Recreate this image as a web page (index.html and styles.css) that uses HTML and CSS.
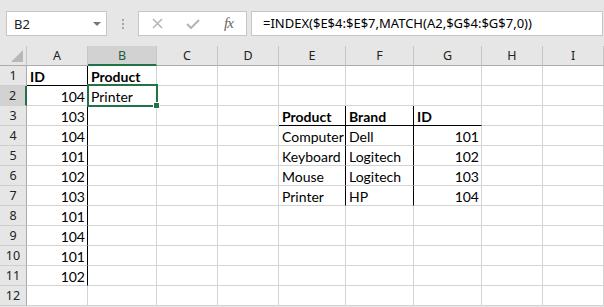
FILE: index.html
```html
<!DOCTYPE html>
<html lang="en">
<head>
    <meta charset="UTF-8">
    <title>INDEX MATCH</title>
    <link rel="stylesheet" href="styles.css">
</head>
<body>
    <div class="toolbar">
        <div class="namebox">
            <span>B2</span>
            <span class="drop"></span>
        </div>
        <div class="grip"><i></i><i></i><i></i></div>
        <div class="fxbox">
            <svg class="btn-x" width="11" height="11" viewBox="0 0 11 11"><path d="M1 1L10 10M10 1L1 10" stroke="#b4b4b4" stroke-width="1.5" fill="none"/></svg>
            <svg class="btn-ok" width="14" height="10" viewBox="0 0 14 10"><path d="M1 5L5 9L13 1" stroke="#b4b4b4" stroke-width="2" fill="none"/></svg>
            <span class="fx">fx</span>
        </div>
        <div class="formula">=INDEX($E$4:$E$7,MATCH(A2,$G$4:$G$7,0))</div>
    </div>

    <div class="grid">
        <div class="row head">
            <div class="corner"><span class="tri"></span></div>
            <div class="ch">A</div><div class="ch sel">B</div><div class="ch">C</div><div class="ch">D</div>
            <div class="ch">E</div><div class="ch">F</div><div class="ch">G</div><div class="ch">H</div><div class="ch">I</div>
        </div>
        <div class="row">
            <div class="rh">1</div>
            <div class="c b bb vr">ID</div><div class="c b">Product</div><div class="c"></div><div class="c"></div>
            <div class="c"></div><div class="c"></div><div class="c"></div><div class="c"></div><div class="c"></div>
        </div>
        <div class="row">
            <div class="rh sel">2</div>
            <div class="c n vr">104</div><div class="c active">Printer</div><div class="c"></div><div class="c"></div>
            <div class="c"></div><div class="c"></div><div class="c"></div><div class="c"></div><div class="c"></div>
        </div>
        <div class="row">
            <div class="rh">3</div>
            <div class="c n vr">103</div><div class="c"></div><div class="c"></div><div class="c"></div>
            <div class="c b bb vr">Product</div><div class="c b bb vr">Brand</div><div class="c b bb">ID</div><div class="c"></div><div class="c"></div>
        </div>
        <div class="row">
            <div class="rh">4</div>
            <div class="c n vr">104</div><div class="c"></div><div class="c"></div><div class="c"></div>
            <div class="c vr">Computer</div><div class="c vr">Dell</div><div class="c n">101</div><div class="c"></div><div class="c"></div>
        </div>
        <div class="row">
            <div class="rh">5</div>
            <div class="c n vr">101</div><div class="c"></div><div class="c"></div><div class="c"></div>
            <div class="c vr">Keyboard</div><div class="c vr">Logitech</div><div class="c n">102</div><div class="c"></div><div class="c"></div>
        </div>
        <div class="row">
            <div class="rh">6</div>
            <div class="c n vr">102</div><div class="c"></div><div class="c"></div><div class="c"></div>
            <div class="c vr">Mouse</div><div class="c vr">Logitech</div><div class="c n">103</div><div class="c"></div><div class="c"></div>
        </div>
        <div class="row">
            <div class="rh">7</div>
            <div class="c n vr">103</div><div class="c"></div><div class="c"></div><div class="c"></div>
            <div class="c vr">Printer</div><div class="c vr">HP</div><div class="c n">104</div><div class="c"></div><div class="c"></div>
        </div>
        <div class="row">
            <div class="rh">8</div>
            <div class="c n vr">101</div><div class="c"></div><div class="c"></div><div class="c"></div>
            <div class="c"></div><div class="c"></div><div class="c"></div><div class="c"></div><div class="c"></div>
        </div>
        <div class="row">
            <div class="rh">9</div>
            <div class="c n vr">104</div><div class="c"></div><div class="c"></div><div class="c"></div>
            <div class="c"></div><div class="c"></div><div class="c"></div><div class="c"></div><div class="c"></div>
        </div>
        <div class="row">
            <div class="rh">10</div>
            <div class="c n vr">101</div><div class="c"></div><div class="c"></div><div class="c"></div>
            <div class="c"></div><div class="c"></div><div class="c"></div><div class="c"></div><div class="c"></div>
        </div>
        <div class="row">
            <div class="rh">11</div>
            <div class="c n vr">102</div><div class="c"></div><div class="c"></div><div class="c"></div>
            <div class="c"></div><div class="c"></div><div class="c"></div><div class="c"></div><div class="c"></div>
        </div>
        <div class="row">
            <div class="rh">12</div>
            <div class="c"></div><div class="c"></div><div class="c"></div><div class="c"></div>
            <div class="c"></div><div class="c"></div><div class="c"></div><div class="c"></div><div class="c"></div>
        </div>
    </div>
</body>
</html>
```

FILE: styles.css
```css
body {
    margin: 0;
    background-color: #e6e6e6;
    overflow: hidden;
    font-family: 'Noto Sans', sans-serif;
}

/* formula bar */
.toolbar {
    display: flex;
    align-items: flex-start;
    height: 46px;
    padding: 11px 1px 0 6px;
    box-sizing: border-box;
}

.namebox {
    width: 101px;
    height: 25px;
    box-sizing: border-box;
    border: 1px solid #c6c6c6;
    background-color: #fff;
    display: flex;
    align-items: center;
    justify-content: space-between;
    padding: 0 5px 0 7px;
    font-size: 13px;
    color: #222;
}

.drop {
    width: 0;
    height: 0;
    border-left: 4px solid transparent;
    border-right: 4px solid transparent;
    border-top: 4px solid #777;
}

.grip {
    width: 31px;
    height: 25px;
    display: flex;
    flex-direction: column;
    align-items: center;
    justify-content: center;
    gap: 2px;
}

.grip i {
    width: 2px;
    height: 2px;
    background-color: #a6a6a6;
}

.fxbox {
    width: 109px;
    height: 25px;
    box-sizing: border-box;
    border: 1px solid #c6c6c6;
    background-color: #fff;
    display: flex;
    align-items: center;
    padding-left: 13px;
}

.btn-x {
    margin-right: 23px;
}

.btn-ok {
    margin-right: 24px;
}

.fx {
    font-family: 'Liberation Serif', serif;
    font-style: italic;
    font-size: 15px;
    color: #666;
    letter-spacing: -1px;
}

.formula {
    flex: 1;
    height: 25px;
    box-sizing: border-box;
    border: 1px solid #c6c6c6;
    background-color: #fff;
    margin-left: 4px;
    padding: 2px 0 0 11px;
    font-size: 13px;
    color: #000;
    white-space: nowrap;
}

/* sheet */
.grid {
    background-color: #fff;
}

.row {
    display: grid;
    grid-template-columns: 27px 61px 69px 61px 61px 67px 68px 68px 61px 61px;
    height: 20px;
}

.row.head {
    background-color: #e6e6e6;
    height: 20px;
}

.corner {
    position: relative;
    border-right: 1px solid #c6c6c6;
    border-bottom: 1px solid #ababab;
}

.tri {
    position: absolute;
    right: 3px;
    bottom: 3px;
    width: 0;
    height: 0;
    border-left: 12px solid transparent;
    border-bottom: 12px solid #b8b8b8;
}

.ch {
    border-right: 1px solid #c6c6c6;
    border-bottom: 1px solid #ababab;
    display: flex;
    align-items: flex-end;
    justify-content: center;
    padding-bottom: 2px;
    font-size: 12.5px;
    line-height: 14px;
    color: #222;
}

.ch.sel {
    background-color: #d2d2d2;
    border-bottom: 2px solid #217346;
    padding-bottom: 1px;
    color: #1d5e39;
}

.rh {
    background-color: #e6e6e6;
    border-right: 1px solid #ababab;
    border-bottom: 1px solid #cfcfcf;
    display: flex;
    align-items: flex-end;
    justify-content: center;
    padding-bottom: 2px;
    box-sizing: border-box;
    font-size: 12.5px;
    line-height: 14px;
    color: #222;
}

.rh.sel {
    background-color: #d2d2d2;
    border-right: 2px solid #217346;
}

.c {
    border-right: 1px solid #d4d4d4;
    border-bottom: 1px solid #d4d4d4;
    display: flex;
    align-items: flex-end;
    padding: 0 3px;
    font-family: 'Lato', sans-serif;
    font-size: 14px;
    line-height: 16px;
    color: #000;
    white-space: nowrap;
}

.c.n {
    justify-content: flex-end;
    padding-right: 2px;
}

.c.b {
    font-weight: bold;
}

.c.bb {
    border-bottom-color: #000;
}

.c.vr {
    border-right-color: #000;
}

.c.active {
    position: relative;
}

.c.active::before {
    content: '';
    position: absolute;
    top: -2px;
    left: -1px;
    right: -2px;
    bottom: -2px;
    border: 2px solid #217346;
}

.c.active::after {
    content: '';
    position: absolute;
    right: -4px;
    bottom: -4px;
    width: 5px;
    height: 5px;
    background-color: #217346;
    border: 1px solid #fff;
}
```
